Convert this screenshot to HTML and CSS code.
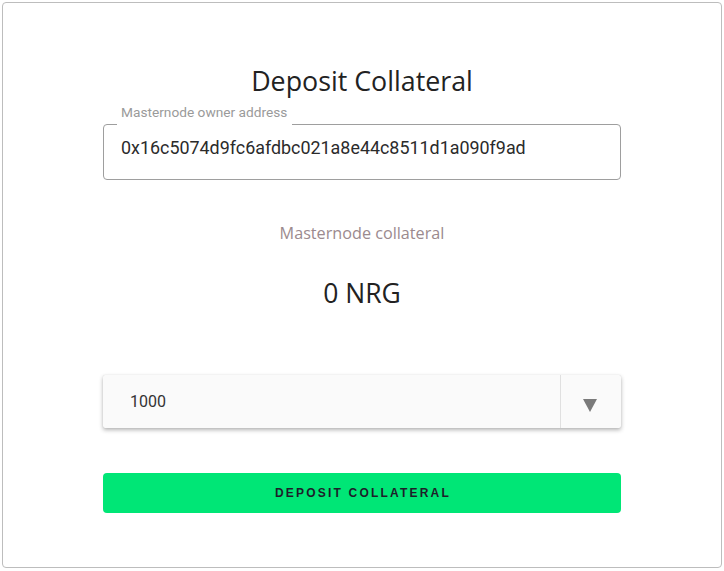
FILE: index.html
```html
<!DOCTYPE html>
<html>
<head>
<meta charset="utf-8">
<link rel="stylesheet" href="styles.css">
</head>
<body>
<div class="card">
  <div class="col">
    <h1 class="title">Deposit Collateral</h1>
    <div class="field">
      <span class="legend">Masternode owner address</span>
      <div class="value">0x16c5074d9fc6afdbc021a8e44c8511d1a090f9ad</div>
    </div>
    <div class="label">Masternode collateral</div>
    <div class="amount">0 NRG</div>
    <div class="select">
      <div class="select-value">1000</div>
      <div class="select-arrow">
        <svg width="14" height="13" viewBox="0 0 14 13"><polygon points="0,0 14,0 7,13" fill="#7a7a7a"/></svg>
      </div>
    </div>
    <button class="btn">DEPOSIT COLLATERAL</button>
  </div>
</div>
</body>
</html>
```
FILE: styles.css
```css
html, body { margin: 0; padding: 0; background: #fff; }
body { padding: 2px; }
.card {
  box-sizing: border-box;
  width: 720px;
  height: 566px;
  border: 1px solid #bdbdbd;
  border-radius: 4px;
  display: flex;
  justify-content: center;
}
.col {
  width: 518px;
  display: flex;
  flex-direction: column;
  padding-top: 60px;
}
.title {
  margin: 0;
  font-family: "Open Sans", sans-serif;
  font-weight: 400;
  font-size: 26.8px;
  line-height: 36px;
  color: #222;
  text-align: center;
}
.field {
  margin-top: 25px;
  padding: 13px 17px 0 17px;
  border: 1px solid #9e9e9e;
  border-radius: 4px;
  height: 56px;
  box-sizing: border-box;
  position: relative;
}
.legend {
  position: absolute;
  left: 13px;
  top: -21px;
  padding: 0 5px 6px 4px;
  background: #fff;
  font-family: Roboto, "Liberation Sans", sans-serif;
  font-size: 13.7px;
  line-height: 16px;
  color: #9a9a9a;
}
.value {
  font-family: Roboto, "Liberation Sans", sans-serif;
  font-size: 17.9px;
  color: #2b2b2b;
  line-height: 20px;
}
.label {
  margin-top: 42px;
  font-family: "Open Sans", sans-serif;
  font-size: 16.2px;
  line-height: 22px;
  color: #9b8a8e;
  text-align: center;
}
.amount {
  margin-top: 33px;
  font-family: "Open Sans", sans-serif;
  font-size: 26.5px;
  line-height: 32px;
  color: #222;
  text-align: center;
}
.select {
  margin-top: 66px;
  height: 53px;
  background: #fafafa;
  border-radius: 2px;
  box-shadow: 0 2px 4px rgba(0,0,0,0.3), 0 0 1px rgba(0,0,0,0.15);
  display: flex;
}
.select-value {
  flex: 1;
  padding-left: 27px;
  display: flex;
  align-items: center;
  font-family: Roboto, "Liberation Sans", sans-serif;
  font-size: 16px;
  color: #333;
}
.select-arrow {
  width: 61px;
  box-sizing: border-box;
  border-left: 1px solid #e0e0e0;
  display: flex;
  align-items: center;
  justify-content: center;
  padding: 7px 3px 0 0;
}
.btn {
  margin-top: 45px;
  height: 40px;
  border: none;
  border-radius: 4px;
  background: #00e676;
  font-family: "Liberation Sans", Arial, sans-serif;
  font-weight: 700;
  font-size: 12px;
  letter-spacing: 2.2px;
  color: #1e1e2a;
  padding: 0 0 0 2px;
}
```
